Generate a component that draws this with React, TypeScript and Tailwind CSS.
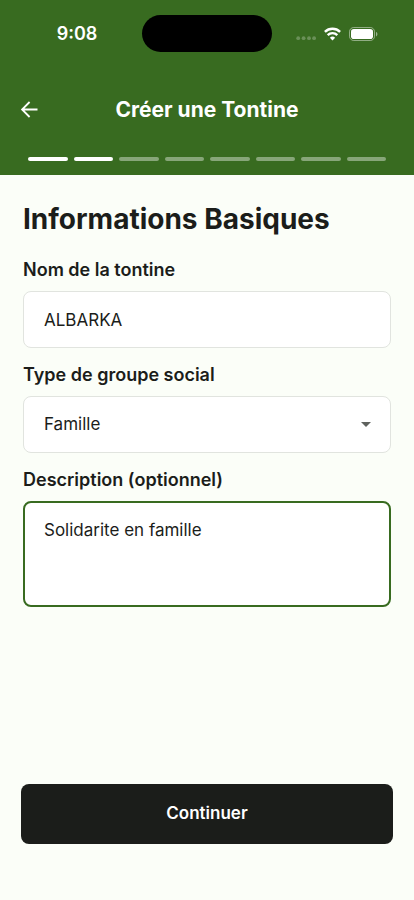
import { useState } from 'react';

const TOTAL_STEPS = 8;
const groupTypes = ['Famille', 'Amis', 'Collègues', 'Quartier', 'Association'];

function StatusBar() {
  return (
    <div className="grid grid-cols-[1fr_130px_1fr] items-center pt-[15px] text-white">
      <span className="pl-3 text-center text-lg leading-6 font-semibold">9:08</span>
      <div className="h-[37px] rounded-full bg-black"></div>
      <div className="flex items-center justify-center gap-2 pr-3">
        <svg width="20" height="14" viewBox="0 0 20 14" fill="currentColor" className="opacity-25" aria-hidden="true">
          <circle cx="2.2" cy="11.2" r="1.9" />
          <circle cx="7.6" cy="11.2" r="1.9" />
          <circle cx="13" cy="11.2" r="1.9" />
          <circle cx="18.1" cy="11.2" r="1.9" />
        </svg>
        <svg width="17" height="14" viewBox="0 0 17 14" fill="none" stroke="currentColor" strokeWidth="2.4" aria-hidden="true">
          <path d="M0.9 4.9a10.8 10.8 0 0 1 15.2 0" />
          <path d="M3.7 8.1a6.8 6.8 0 0 1 9.6 0" />
          <path d="M8.5 13.4 5.9 10.8a3.7 3.7 0 0 1 5.2 0Z" fill="currentColor" stroke="none" />
        </svg>
        <svg width="29" height="14" viewBox="0 0 29 14" fill="none" aria-hidden="true">
          <rect x="0.5" y="0.5" width="25" height="13" rx="4.2" stroke="currentColor" strokeOpacity="0.45" />
          <rect x="2" y="2" width="22" height="10" rx="2.8" fill="currentColor" />
          <path d="M27 5v4.4c.9-.4 1.4-1.2 1.4-2.2S27.9 5.4 27 5Z" fill="currentColor" fillOpacity="0.5" />
        </svg>
      </div>
    </div>
  );
}

function StepProgress({ current }: { current: number }) {
  return (
    <div className="flex gap-1.5 px-7 pt-[19px] pb-3.5">
      {Array.from({ length: TOTAL_STEPS }, (_, i) => (
        <div key={i} className={`h-1 flex-1 rounded-full ${i < current ? 'bg-white' : 'bg-white/40'}`}></div>
      ))}
    </div>
  );
}

export default function App() {
  const [name, setName] = useState('ALBARKA');
  const [groupType, setGroupType] = useState('Famille');
  const [description, setDescription] = useState('Solidarite en famille');

  return (
    <div className="flex min-h-screen flex-col bg-[#fbfef8] font-['Inter',sans-serif] text-[#1b1d1a]">
      {/* Header */}
      <header className="bg-[#386b20]">
        <StatusBar />
        <div className="mt-[30px] grid h-14 grid-cols-[56px_1fr_56px] items-center text-white">
          <button type="button" aria-label="Retour" className="flex h-full items-center pl-5">
            <svg width="18" height="18" viewBox="0 0 18 18" fill="none" stroke="currentColor" strokeWidth="1.8" aria-hidden="true">
              <path d="M17.5 8.5H2.4M9.6 1 2.1 8.5l7.5 7.5" />
            </svg>
          </button>
          <h1 className="text-center text-[21px] leading-7 font-bold">Créer une Tontine</h1>
        </div>
        <StepProgress current={2} />
      </header>

      {/* Form */}
      <form className="flex flex-1 flex-col" onSubmit={(e) => e.preventDefault()}>
        <div className="flex flex-col px-[23px] pt-6">
          <h2 className="mb-[19px] text-[28px] leading-10 font-bold">Informations Basiques</h2>

          <label htmlFor="name" className="mb-[9px] text-lg leading-6 font-semibold">
            Nom de la tontine
          </label>
          <input
            id="name"
            value={name}
            onChange={(e) => setName(e.target.value)}
            className="mb-[15px] h-[57px] w-full rounded-lg border border-[#e1e4df] bg-white px-5 text-[17px] outline-none"
          />

          <label htmlFor="group-type" className="mb-[9px] text-lg leading-6 font-semibold">
            Type de groupe social
          </label>
          <div className="relative mb-[15px]">
            <select
              id="group-type"
              value={groupType}
              onChange={(e) => setGroupType(e.target.value)}
              className="h-[57px] w-full appearance-none rounded-lg border border-[#e1e4df] bg-white px-5 text-[17px] outline-none"
            >
              {groupTypes.map((type) => (
                <option key={type}>{type}</option>
              ))}
            </select>
            <svg
              width="10"
              height="5"
              viewBox="0 0 10 5"
              fill="#5f625e"
              className="pointer-events-none absolute inset-y-0 right-5 my-auto"
              aria-hidden="true"
            >
              <path d="M0 0h10L5 5Z" />
            </svg>
          </div>

          <label htmlFor="description" className="mb-[9px] text-lg leading-6 font-semibold">
            Description (optionnel)
          </label>
          <textarea
            id="description"
            rows={3}
            value={description}
            onChange={(e) => setDescription(e.target.value)}
            className="h-[106px] w-full resize-none rounded-lg border-2 border-[#386b20] bg-white px-[19px] py-[15px] text-[17px] leading-6 outline-none"
          />
        </div>

        {/* Footer */}
        <div className="mt-auto px-[21px] pt-6 pb-14">
          <button type="submit" className="h-[60px] w-full rounded-lg bg-[#1b1d1a] text-[17px] font-semibold text-white">
            Continuer
          </button>
        </div>
      </form>
    </div>
  );
}
